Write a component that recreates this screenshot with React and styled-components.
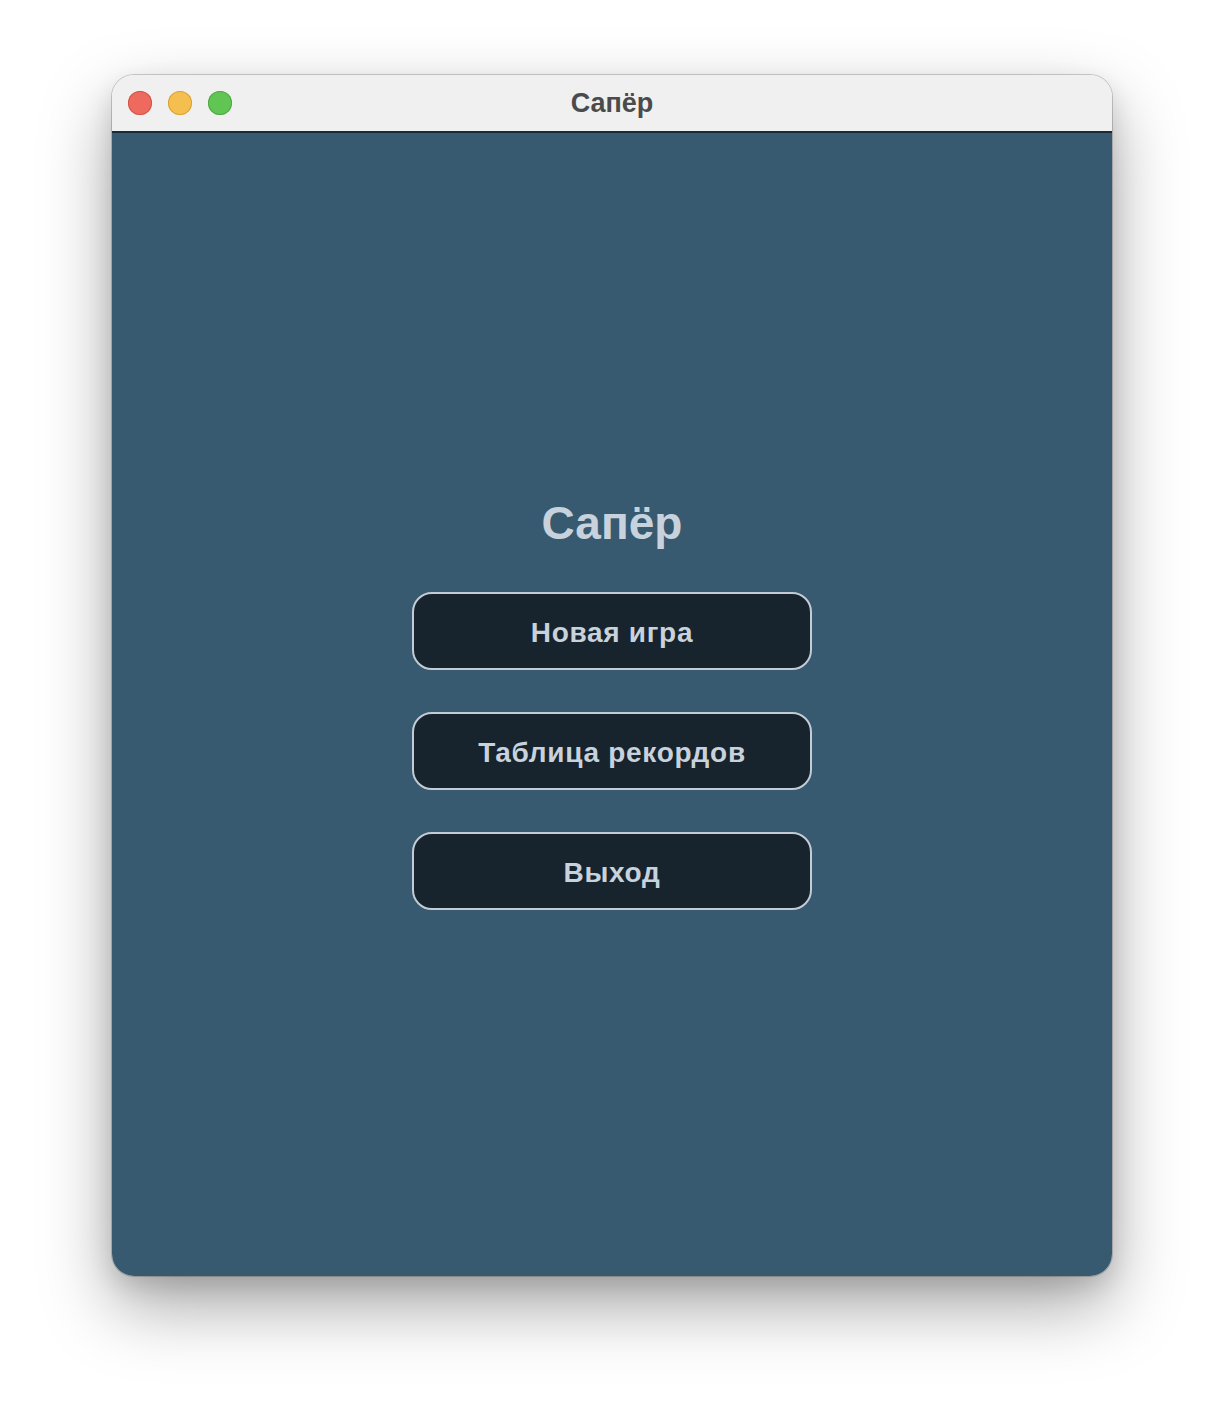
import React from "react";
import styled, { createGlobalStyle } from "styled-components";

const Global = createGlobalStyle`
  html, body { margin: 0; padding: 0; background: #ffffff; }
  body { font-family: "Liberation Sans", Arial, sans-serif; }
`;

const Page = styled.div`
  width: 1224px;
  height: 1424px;
  display: flex;
  justify-content: center;
  padding-top: 75px;
  box-sizing: border-box;
`;

const Window = styled.div`
  width: 1000px;
  height: 1201px;
  border-radius: 22px;
  overflow: hidden;
  display: flex;
  flex-direction: column;
  box-shadow: 0 0 0 1px rgba(0,0,0,0.18), 0 30px 70px rgba(0,0,0,0.35), 0 10px 25px rgba(0,0,0,0.12);
`;

const TitleBar = styled.div`
  height: 56px;
  flex: none;
  background: #f0f0f0;
  border-bottom: 2px solid #1b2a36;
  display: flex;
  align-items: center;
  position: relative;
  padding-left: 16px;
  gap: 16px;
`;

const Light = styled.span`
  width: 24px;
  height: 24px;
  border-radius: 50%;
  background: ${(p) => p.$c};
  box-shadow: inset 0 0 0 1px ${(p) => p.$b};
`;

const TitleText = styled.div`
  position: absolute;
  left: 0;
  right: 0;
  top: 1px;
  bottom: 0;
  display: flex;
  align-items: center;
  justify-content: center;
  font-weight: 700;
  font-size: 27px;
  color: #4b4b4b;
  pointer-events: none;
`;

const Content = styled.div`
  flex: 1;
  background: #375a70;
  display: flex;
  flex-direction: column;
  align-items: center;
  padding-top: 362px;
`;

const Heading = styled.h1`
  margin: 0;
  font-size: 46px;
  line-height: 56px;
  font-weight: 700;
  color: #c8d2dc;
`;

const Menu = styled.div`
  margin-top: 41px;
  display: flex;
  flex-direction: column;
  gap: 42px;
`;

const Button = styled.button`
  width: 400px;
  height: 78px;
  box-sizing: border-box;
  background: #17232d;
  border: 2px solid #c3ccd4;
  border-radius: 20px;
  color: #c8d2dc;
  font-family: "Liberation Sans", Arial, sans-serif;
  font-weight: 700;
  font-size: 28px;
  letter-spacing: 0.7px;
  cursor: pointer;
  padding: 3px 0 0;
`;

export default function App() {
  return (
    <>
      <Global />
      <Page>
        <Window>
          <TitleBar>
            <Light $c="#ee6a5f" $b="#d35447" />
            <Light $c="#f5bf4f" $b="#d9a33a" />
            <Light $c="#61c554" $b="#4ea943" />
            <TitleText>Сапёр</TitleText>
          </TitleBar>
          <Content>
            <Heading>Сапёр</Heading>
            <Menu>
              <Button>Новая игра</Button>
              <Button>Таблица рекордов</Button>
              <Button>Выход</Button>
            </Menu>
          </Content>
        </Window>
      </Page>
    </>
  );
}
